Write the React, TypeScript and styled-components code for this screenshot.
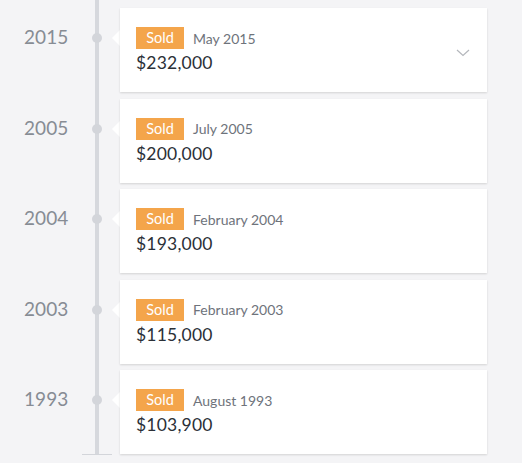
import React from "react";
import styled, { createGlobalStyle } from "styled-components";

const Global = createGlobalStyle`
  html, body { margin: 0; padding: 0; background: #f4f4f6; }
  body { font-family: Lato, "Open Sans", "Noto Sans", sans-serif; }
`;

const Page = styled.div`
  width: 522px;
  height: 463px;
  overflow: hidden;
  background: #f4f4f6;
`;

const Timeline = styled.div`
  display: flex;
  flex-direction: column;
  width: 487px;
`;

const Row = styled.div<{ $first?: boolean }>`
  display: grid;
  grid-template-columns: 86px 22px 12px 1fr;
  padding-top: ${(p) => (p.$first ? "8px" : "6.5px")};
`;

const Year = styled.div`
  display: flex;
  align-items: flex-start;
  padding: 17px 0 0 24px;
  font-size: 19px;
  font-weight: 400;
  color: #878c94;
  letter-spacing: 0.1px;
  line-height: 24px;
`;

const Rail = styled.div<{ $first?: boolean }>`
  position: relative;
  margin-top: ${(p) => (p.$first ? "-8px" : "-6.5px")};
  &::before {
    content: "";
    position: absolute;
    left: 9px;
    top: 0;
    bottom: 0;
    width: 4px;
    background: #d6d8dd;
  }
`;

const Dot = styled.span`
  position: absolute;
  left: 6px;
  width: 10px;
  height: 10px;
  border-radius: 50%;
  background: #d3d5da;
`;

const Pointer = styled.div`
  position: relative;
  &::after {
    content: "";
    position: absolute;
    right: -1px;
    top: 21px;
    width: 0;
    height: 0;
    border-top: 9px solid transparent;
    border-bottom: 9px solid transparent;
    border-right: 9px solid #ffffff;
  }
`;

const Card = styled.div`
  position: relative;
  height: 84px;
  box-sizing: border-box;
  background: #ffffff;
  box-shadow: 0 1px 2px rgba(0, 0, 0, 0.14);
  padding: 19px 16px 0 16px;
  display: flex;
  flex-direction: column;
  gap: 2px;
`;

const Top = styled.div`
  display: flex;
  align-items: center;
  gap: 9px;
`;

const Badge = styled.span`
  display: inline-flex;
  align-items: center;
  justify-content: center;
  width: 48px;
  height: 22px;
  background: #f4a54b;
  color: #ffffff;
  font-size: 14.5px;
  line-height: 22px;
`;

const DateText = styled.span`
  font-size: 14px;
  color: #6e737b;
`;

const Price = styled.div`
  font-size: 17.5px;
  color: #2b3037;
  letter-spacing: 0.2px;
  line-height: 24px;
`;

const Chevron = styled.svg`
  position: absolute;
  right: 17px;
  top: 41px;
`;

const Footer = styled.div`
  display: grid;
  grid-template-columns: 82px 30px;
`;

const EndCap = styled.div`
  grid-column: 2;
  height: 1px;
  background: #d3d5da;
`;

const sales = [
  { year: "2015", date: "May 2015", price: "$232,000", chevron: true },
  { year: "2005", date: "July 2005", price: "$200,000" },
  { year: "2004", date: "February 2004", price: "$193,000" },
  { year: "2003", date: "February 2003", price: "$115,000" },
  { year: "1993", date: "August 1993", price: "$103,900" },
];

export default function App() {
  return (
    <Page>
      <Global />
      <Timeline>
        {sales.map((s, i) => (
          <Row key={s.year} $first={i === 0}>
            <Year>{s.year}</Year>
            <Rail $first={i === 0}>
              <Dot style={{ top: i === 0 ? 33 : 31.5 }} />
            </Rail>
            <Pointer />
            <Card>
              <Top>
                <Badge>Sold</Badge>
                <DateText>{s.date}</DateText>
              </Top>
              <Price>{s.price}</Price>
              {s.chevron && (
                <Chevron width="14" height="8" viewBox="0 0 14 8">
                  <path d="M1 1 L7 6.5 L13 1" fill="none" stroke="#b4b7bc" strokeWidth="1.2" />
                </Chevron>
              )}
            </Card>
          </Row>
        ))}
        <Footer>
          <EndCap />
        </Footer>
      </Timeline>
    </Page>
  );
}
